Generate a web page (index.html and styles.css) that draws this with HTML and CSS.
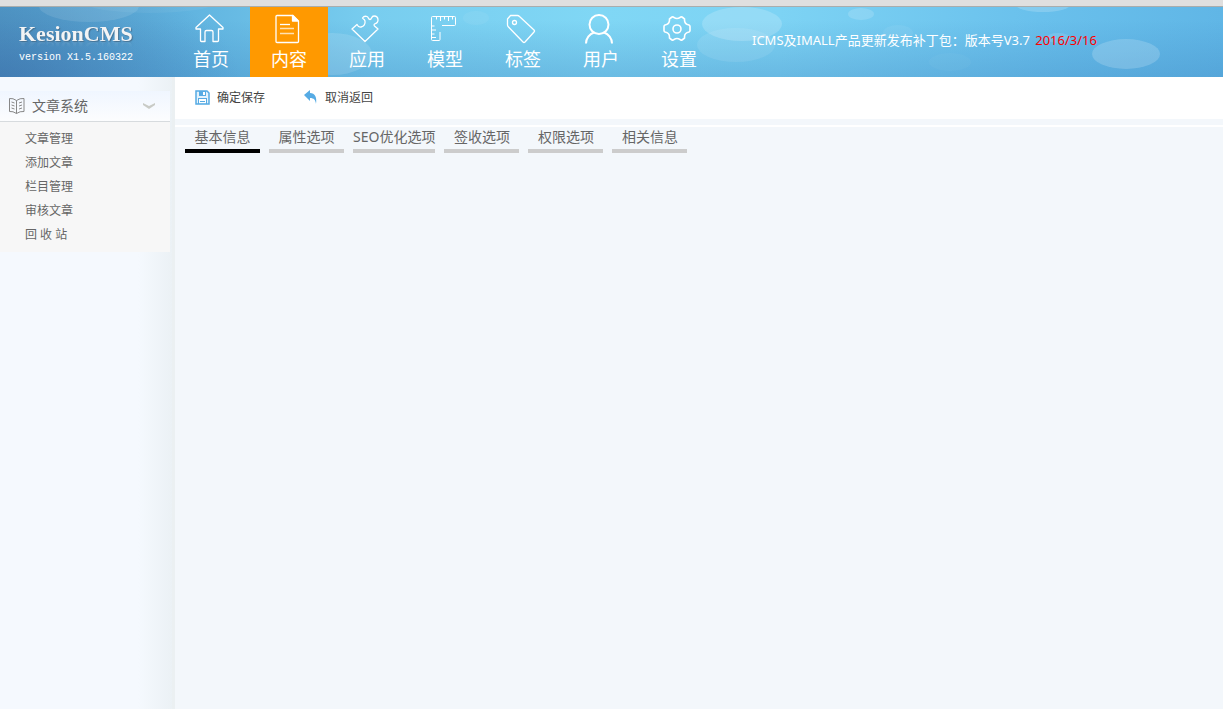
FILE: index.html
```
<!DOCTYPE html>
<html lang="zh-CN">
<head>
<meta charset="utf-8">
<title>KesionCMS</title>
<link rel="stylesheet" href="styles.css">
</head>
<body>
<header class="header">
  <svg class="bubbles" width="1223" height="70" viewBox="0 7 1223 70" fill="#fff" aria-hidden="true">
    <ellipse cx="89" cy="6" rx="50" ry="16" opacity=".1"/>
    <ellipse cx="150" cy="4" rx="62" ry="9" opacity=".05"/>
    <ellipse cx="332" cy="54" rx="40" ry="21" opacity=".13"/>
    <ellipse cx="476" cy="18" rx="13" ry="7" opacity=".06"/>
    <ellipse cx="742" cy="24" rx="40" ry="17" opacity=".18"/>
    <ellipse cx="736" cy="45" rx="39" ry="17" opacity=".09"/>
    <ellipse cx="861" cy="14" rx="13" ry="6" opacity=".15"/>
    <ellipse cx="898" cy="33" rx="15" ry="8" opacity=".06"/>
    <ellipse cx="1043" cy="4" rx="28" ry="8" opacity=".18"/>
    <ellipse cx="1058" cy="38" rx="12" ry="5" opacity=".12"/>
    <ellipse cx="950" cy="62" rx="21" ry="9" opacity=".03"/>
    <ellipse cx="1126" cy="54" rx="34" ry="15" opacity=".18"/>
  </svg>
  <div class="brand">
    <div class="logo">KesionCMS</div>
    <div class="version">version X1.5.160322</div>
  </div>
  <nav class="nav">
    <a class="nav-item" href="#"><svg class="nav-icon" viewBox="0 0 30 30"><path d="M15.500 1 2 13.500v1.500h4.500v11.500q0 1 1 1H11V18q0-1.500 1.500-1.500h5Q19 16.500 19 18v9.500h4.500q1 0 1-1V15H29v-1.500z"/></svg>首页</a>
    <a class="nav-item active" href="#"><svg class="nav-icon" viewBox="0 0 30 30"><path d="M21 1.500H5q-1 0-1 1v25q0 1 1 1h20.500q1 0 1-1V7z"/><path fill="#fff" d="M20.500 1.500V7h5.500z"/><path d="M8 10.500h10"/><path opacity=".7" d="M8 14.500h14M8 19.500h14"/></svg>内容</a>
    <a class="nav-item" href="#"><svg class="nav-icon" viewBox="0 0 30 30"><path d="M15 27.500 2 15l5-4.500q1.500 3 4 2.500c3-.5 4.500-3 4-6-.5-1.500-2-2-2.500-3 1-1.500 3-2 4.500-1.500C19 3.500 18 5.500 20 5.500S21 2 24 2q4 0 4 4 0 3-3.500 4-1 1 0 2l3.500 3z"/></svg>应用</a>
    <a class="nav-item" href="#"><svg class="nav-icon thin" viewBox="0 0 30 30"><path d="M14 11.500h12.500q1 0 1-1v-7q0-1-1-1h-22q-1 0-1 1v22q0 1 1 1H11q1 0 1-1V18M8.500 2.500v3M12.500 2.500V7M16.500 2.500v3M20.500 2.500V7M24.500 2.500v3M3.500 12h3M3.500 16H8M3.500 20h3M3.500 23.500H8"/></svg>模型</a>
    <a class="nav-item" href="#"><svg class="nav-icon" viewBox="0 0 30 30"><path d="M4.500 1.500h7q1 0 2 1L28 16q1 1 0 2l-9 10q-1 1-2 0L2.500 13q-1-1-1-2V5z"/><circle cx="8.500" cy="8.500" r="2"/></svg>标签</a>
    <a class="nav-item" href="#"><svg class="nav-icon bold" viewBox="0 0 30 30"><circle cx="15" cy="10.500" r="9.500"/><path d="M2 29.500c0-5 3.500-9.500 8-11M28 29.500c0-5-3.500-9.500-8-11"/></svg>用户</a>
    <a class="nav-item" href="#"><svg class="nav-icon medium" viewBox="0 0 30 30"><path d="M12 3.500q3 2 6 0 1-1 2-.5l2 1.500q1 .5.500 1.500c0 3 1.500 4.500 4.500 5q1 .5 1 1.500v4q0 1-1 1.500c-3 .5-4.500 2-4.500 5q.5 1-.5 1.500l-2 1.500q-1 .5-2-.5-3-2-6 0-1 1-2 .5l-2-1.500q-1-.5-.5-1.500c0-3-1.500-4.500-4.500-5q-1-.5-1-1.500v-4q0-1 1-1.500c3-.5 4.500-2 4.500-5q-.5-1 .5-1.500l2-1.500q1-.5 2 .5z"/><circle cx="15" cy="15" r="4"/></svg>设置</a>
  </nav>
  <p class="notice">ICMS及IMALL产品更新发布补丁包<span class="colon">：</span>版本号V3.7 <span class="date">2016/3/16</span></p>
</header>
<div class="body">
  <aside class="sidebar">
    <button class="group-head" type="button">
      <svg width="18" height="18" viewBox="0 0 18 18" fill="none" stroke="#888"><path d="M8.500 3.500Q5 1 1.500 1.500v13q3.500-.5 7 2 3.500-2.500 7.500-2v-13q-4-.5-7.500 2zv13M3.500 5l3 1M3.500 8l3 1M3.500 11l3 1M14 5l-3 1M14 8l-3 1M14 11l-3 1"/></svg>
      <span class="group-title">文章系统</span>
      <svg width="14" height="8" viewBox="0 0 14 8"><path fill="#c9cbc6" d="M1 1 7 4 13 1v2L7 7 1 3z"/></svg>
    </button>
    <ul class="menu">
      <li><a href="#">文章管理</a></li>
      <li><a href="#">添加文章</a></li>
      <li><a href="#">栏目管理</a></li>
      <li><a href="#">审核文章</a></li>
      <li><a href="#">回 收 站</a></li>
    </ul>
  </aside>
  <main class="main">
    <div class="toolbar">
      <button class="tool" type="button">
        <svg width="15" height="15" viewBox="0 0 15 15"><path fill="#e3f2fc" stroke="#56abe4" stroke-width="1.500" d="M1 1h11l2 2v11H1z"/><path fill="#56abe4" d="M4 1h7v5H4zM3 8h9v6h-1V9H4v5H3z"/><path fill="#fff" d="M8 2h2v3H8zM4 9h7v4H4z"/><path stroke="#56abe4" d="M5 11.500h5"/></svg>
        确定保存
      </button>
      <button class="tool" type="button">
        <svg width="15" height="15" viewBox="0 0 15 15"><path fill="#56abe4" d="M1 5 7 0v3c5 0 7 4 6 11-.5-4-2-6-6-6v3z"/></svg>
        取消返回
      </button>
    </div>
    <div class="tabs" role="tablist">
      <button class="tab selected" type="button" role="tab" aria-selected="true">基本信息</button>
      <button class="tab" type="button" role="tab">属性选项</button>
      <button class="tab" type="button" role="tab">SEO优化选项</button>
      <button class="tab" type="button" role="tab">签收选项</button>
      <button class="tab" type="button" role="tab">权限选项</button>
      <button class="tab" type="button" role="tab">相关信息</button>
    </div>
  </main>
</div>
</body>
</html>
```
FILE: styles.css
```
* {
  box-sizing: border-box;
}

body {
  margin: 0;
  min-height: 100vh;
  display: flex;
  flex-direction: column;
  font-family: "Noto Sans", "Noto Sans CJK SC", sans-serif;
  font-size: 12px;
  color: #666;
  background: #f3f7fb;
}

a {
  color: inherit;
  text-decoration: none;
}

button {
  margin: 0;
  padding: 0;
  border: 0;
  background: none;
  font: inherit;
  color: inherit;
  cursor: pointer;
}

.header {
  position: relative;
  display: flex;
  height: 77px;
  border-top: 6px solid #dfdfdf;
  box-shadow: inset 0 1px #a9adad;
  color: #fff;
  overflow: hidden;
  background:
    radial-gradient(ellipse 240px 110px at 0 100%, rgba(55, 95, 155, 0.45), transparent),
    linear-gradient(to bottom, transparent 20%, rgba(60, 130, 190, 0.32)),
    linear-gradient(to right, #529dca 0, #60b3df 180px, #78cdef 370px, #80d7f5 600px, #7dd3f4 780px, #69c0ec 1040px, #60b6e6 100%);
}

.bubbles {
  position: absolute;
  top: 1px;
  left: 0;
}

.brand {
  position: relative;
  width: 172px;
  padding: 15px 0 0 19px;
}

.logo {
  font: bold 22px/25px "Liberation Serif", serif;
  color: #f3f4f5;
  text-shadow: 1px 1px 1px #47708f;
  -webkit-box-reflect: below -9px linear-gradient(transparent 60%, rgba(255, 255, 255, 0.2));
}

.version {
  margin-top: 6px;
  font: 10px/12px "Liberation Mono", monospace;
}

.nav {
  position: relative;
  display: flex;
}

.nav-item {
  display: flex;
  flex-direction: column;
  align-items: center;
  width: 78px;
  padding-top: 8px;
  font-size: 18px;
  line-height: 30px;
}

.nav-item.active {
  margin-top: 1px;
  padding-top: 7px;
  background: #f90;
}

.nav-icon {
  width: 30px;
  height: 30px;
  margin-right: 4px;
  fill: none;
  stroke: #fff;
  stroke-width: 1.3;
  stroke-linejoin: round;
}

.nav-icon.thin {
  stroke-width: 1;
}

.nav-icon.medium {
  stroke-width: 1.6;
}

.nav-icon.bold {
  stroke-width: 2;
}

.notice {
  position: relative;
  margin: 0;
  padding: 24px 0 0 34px;
  font-size: 13px;
  line-height: 20px;
  white-space: nowrap;
}

.colon {
  font-family: "Noto Sans CJK TC", sans-serif;
}

.date {
  margin-left: 2px;
  color: #f00;
}

.body {
  display: flex;
  flex: 1;
}

.sidebar {
  width: 175px;
  padding: 14px 2px 0 0;
  border-right: 3px solid #ebf0f2;
  background: linear-gradient(to right, #f5f9fe 138px, #ebf1f5);
}

.group-head {
  display: flex;
  align-items: center;
  width: 100%;
  height: 31px;
  padding: 0 14px 0 8px;
  border-bottom: 1px solid #d7dbde;
  background: linear-gradient(#f0f6ff, #fcfdfe);
}

.group-title {
  flex: 1;
  padding: 0 0 2px 6px;
  font-size: 14px;
  text-align: left;
}

.menu {
  margin: 0;
  padding: 5px 0 5px 25px;
  list-style: none;
  line-height: 24px;
  background: #f7f7f7;
}

.main {
  flex: 1;
}

.toolbar {
  display: flex;
  gap: 38px;
  height: 42px;
  padding: 0 20px 2px;
  background: #fff;
}

.tool {
  display: flex;
  align-items: center;
  gap: 7px;
  color: #444;
}

.tabs {
  display: flex;
  gap: 9px;
  margin-top: 6px;
  padding: 0 10px;
  border-top: 2px solid #fff;
}

.tab {
  min-width: 75px;
  height: 26px;
  padding-bottom: 2px;
  border-bottom: 4px solid #ccc;
  font-size: 14px;
  line-height: 20px;
  color: #666;
}

.tab.selected {
  border-color: #000;
}
```
